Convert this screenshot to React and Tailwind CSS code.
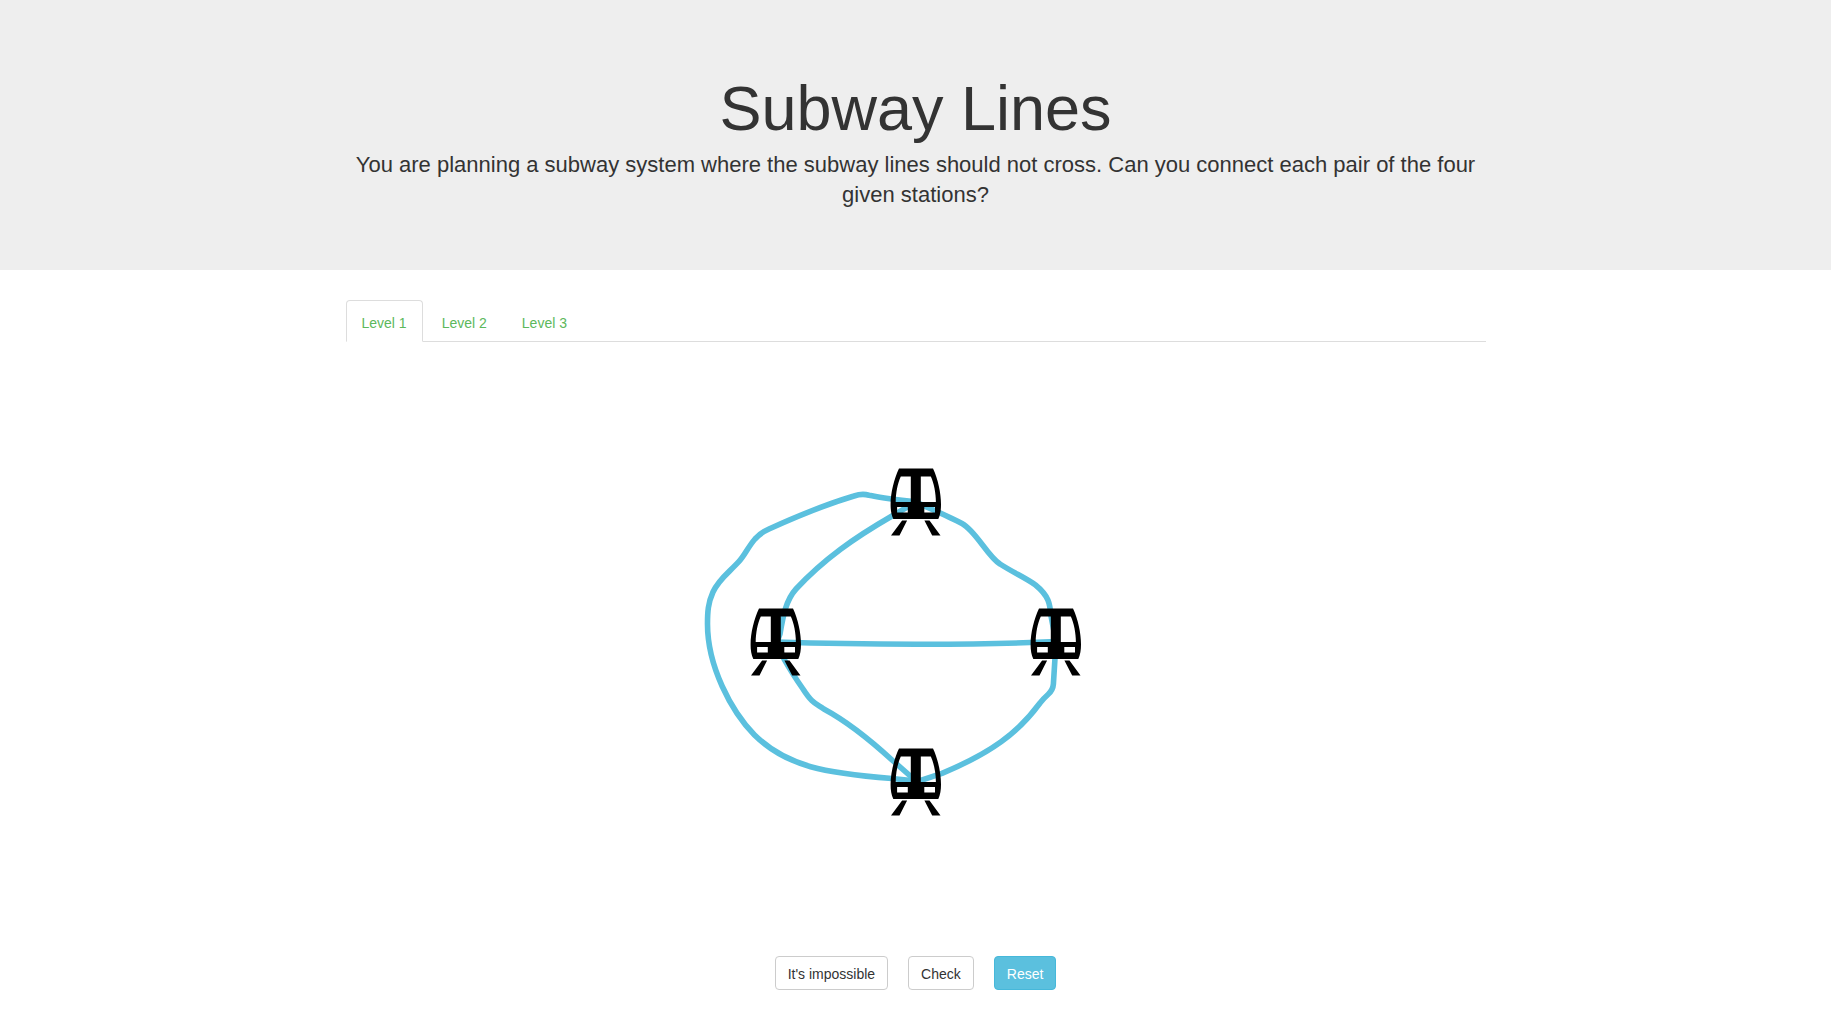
import { useState } from "react";

const STATIONS = [
  [0, -168],
  [-140, -28],
  [140, -28],
  [0, 112],
];

const LINES = [
  "M0-134C-16-136-34-138-47-140.8Q-54-142.8-62-140C-92-131-125-117-147-107Q-155-103.5-161-97C-168-89-171-81-177.2-74.3C-187-63.5-197-57-203-44C-208-33-208.5-24-208.5-12C-208.5 30-185 75-161.5 99C-129 131-90 137-24 142.5L0 145",
  "M0-134L-24-120C-62-98-92-77-120-47C-130-36-133-20-136-2L-139 6",
  "M-139 6C-60 8.5 60 9.5 140 5.5",
  "M-140 4L-132 23C-127 32-120 43-113 53C-104 67-101 67-92.2 73C-68 86-48 102-24 124L0 145",
  "M0-134C8-130 32-120 46-112.5C60-105 72-79 84-72C98-63 110-58 119.5-51C133-40 134-32 135-20L140 6",
  "M140 6L137.4 48Q137 54 132 58.5Q128 62 124 67C102 97 75 117 26 137.3L0 146",
];

function Station({ x, y }) {
  return (
    <g transform={`translate(${x} ${y})`}>
      <path
        fill="#000"
        fillRule="evenodd"
        d="M-17 .5H17C22 11 25 25 25 36.5C25 42 24.3 47 22.3 51H-22.7C-24.7 47 -25.4 42 -25.4 36.5C-25.4 25 -22 11 -17 .5ZM-15.2 8.5C-18.3 15 -20.3 25 -20.3 34H-5.2V8.5ZM4.8 8.5V34H19.9C19.9 25 17.9 15 14.8 8.5ZM-18.9 39H-8.2V44.5H-18.9ZM8.3 39H19V44.5H8.3Z"
      />
      <path fill="#000" d="M-13.9 52.5H-8.9L-16.5 67.5H-25ZM8.4 52.5H13.5L24.5 67.5H16.2Z" />
    </g>
  );
}

function Board() {
  return (
    <svg viewBox="-300 -294 600 614" className="mx-auto block w-[600px] max-w-full" role="img" aria-label="Subway map">
      <g fill="none" stroke="#5bc0de" strokeWidth="5.6" strokeLinejoin="round">
        {LINES.map((d) => (
          <path key={d} d={d} />
        ))}
      </g>
      {STATIONS.map(([x, y]) => (
        <Station key={`${x},${y}`} x={x} y={y} />
      ))}
    </svg>
  );
}

export default function App() {
  const [level, setLevel] = useState(1);
  const button = "rounded border px-3 pt-[7px] pb-[5px] leading-5";
  return (
    <div className="bg-white font-['Liberation_Sans',Arial,sans-serif] text-sm text-[#333]">
      <header className="bg-[#eee] py-12 text-center">
        <div className="mx-auto max-w-[1170px] px-[15px] pt-[26px] pb-3">
          <h1 className="mb-[7px] text-[63px] leading-[69px]">Subway Lines</h1>
          <p className="text-[22px] leading-[30px]">
            You are planning a subway system where the subway lines should not cross. Can you connect each pair of the four given stations?
          </p>
        </div>
      </header>
      <main className="mx-auto max-w-[1170px] px-[15px] pt-[30px] pb-5">
        <nav className="flex gap-[3px] border-b border-[#ddd]">
          {[1, 2, 3].map((n) => (
            <a
              key={n}
              href={`#level-${n}`}
              onClick={() => setLevel(n)}
              className={
                n === level
                  ? "-mb-px rounded-t border border-[#ddd] border-b-white bg-white px-[15px] pt-3 pb-2 leading-5 text-[#5cb85c]"
                  : "-mb-px rounded-t border border-transparent px-[15px] pt-3 pb-2 leading-5 text-[#5cb85c]"
              }
            >
              Level {n}
            </a>
          ))}
        </nav>
        <Board />
        <div className="flex justify-center gap-5">
          <button type="button" className={`${button} border-[#ccc] bg-white`}>It's impossible</button>
          <button type="button" className={`${button} border-[#ccc] bg-white`}>Check</button>
          <button type="button" className={`${button} border-[#46b8da] bg-[#5bc0de] text-white`}>Reset</button>
        </div>
      </main>
    </div>
  );
}
